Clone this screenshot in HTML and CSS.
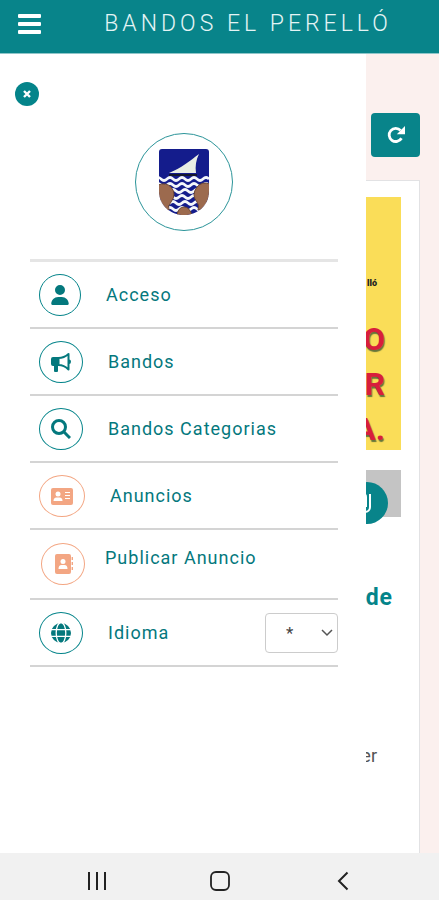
FILE: index.html
```
<!DOCTYPE html>
<html lang="es">
<head>
    <meta charset="UTF-8">
    <meta name="viewport" content="width=device-width, initial-scale=1">
    <title>Bandos El Perelló</title>
    <link rel="stylesheet" href="styles.css">
</head>
<body>
<header class="topbar">
    <button class="burger" type="button" aria-label="Menú">
        <span></span>
        <span></span>
        <span></span>
    </button>
    <h1 class="title">BANDOS EL PERELLÓ</h1>
</header>
<div class="screen">
    <main class="page">
        <div class="toolbar">
            <button class="reload" type="button" aria-label="Recargar">
                <svg viewBox="0 0 20 20" width="20" height="20">
                    <path d="M15.5 13.2A6.6 6.6 0 1 1 14.6 5.4" fill="none" stroke="#fff" stroke-width="2.8"/>
                    <path d="M19 1v8.2h-8.2z" fill="#fff"/>
                </svg>
            </button>
        </div>
        <article class="card">
            <div class="poster">
                <p class="poster-small">lló</p>
                <p class="poster-big">O</p>
                <p class="poster-big">R</p>
                <p class="poster-big">A.</p>
            </div>
            <div class="attach">
                <button class="clip" type="button" aria-label="Adjunto">
                    <svg viewBox="0 0 20 24" width="20" height="24" fill="none" stroke="#fff" stroke-width="2">
                        <path d="M13 3v13a5 5 0 0 1-10 0V6a3 3 0 0 1 6 0v10"/>
                    </svg>
                </button>
            </div>
            <h2 class="card-title">de</h2>
            <p class="card-text">er</p>
        </article>
    </main>
    <aside class="drawer">
        <button class="close" type="button" aria-label="Cerrar">
            <svg viewBox="0 0 10 10" width="10" height="10">
                <path d="M2 2l6 6M8 2l-6 6" stroke="#fff" stroke-width="2.4"/>
            </svg>
        </button>
        <div class="logo">
            <svg viewBox="0 0 50 66" width="50" height="66">
                <defs>
                    <clipPath id="shield">
                        <path d="M3 0H47Q50 0 50 3V42C50 56 39 66 25 66S0 56 0 42V3Q0 0 3 0z"/>
                    </clipPath>
                </defs>
                <g clip-path="url(#shield)">
                    <path d="M0 0h50v66H0z" fill="#141c8c"/>
                    <path d="M10 24C22 19 31 12 40 5C37 11 36 17 37 24z" fill="#e9eee4"/>
                    <path d="M10 26h28" stroke="#15192c" stroke-width="2"/>
                    <g fill="none" stroke="#f4f7fb" stroke-width="2.6">
                        <path d="M-4 30q3-3 6 0t6 0 6 0 6 0 6 0 6 0 6 0 6 0 6 0"/>
                        <path d="M-4 36q3-3 6 0t6 0 6 0 6 0 6 0 6 0 6 0 6 0 6 0"/>
                        <path d="M-1 42q3-3 6 0t6 0 6 0 6 0 6 0 6 0 6 0 6 0"/>
                        <path d="M-4 48q3-3 6 0t6 0 6 0 6 0 6 0 6 0 6 0 6 0 6 0"/>
                        <path d="M-1 54q3-3 6 0t6 0 6 0 6 0 6 0 6 0 6 0 6 0"/>
                        <path d="M-4 60q3-3 6 0t6 0 6 0 6 0 6 0 6 0 6 0 6 0 6 0"/>
                    </g>
                    <g fill="#9c6a4e" stroke="#6b4632">
                        <path d="M-1 36q8-3 13 2q6 7 0 15q-4 4-2 8L-1 60z"/>
                        <path d="M51 35q-8-3-13 3q-6 8 0 15q3 4 1 8l12-3z"/>
                        <path d="M18 67q1-9 7-9t8 9z"/>
                    </g>
                </g>
            </svg>
        </div>
        <ul class="menu">
            <li class="menu-item">
                <a class="menu-link" href="#">
                    <span class="icon">
                        <svg viewBox="0 0 448 512" width="18" height="20" fill="currentColor"><path d="M224 256A128 128 0 1 0 224 0a128 128 0 1 0 0 256zm-45.700 48C79.800 304 0 383.800 0 482.300C0 498.700 13.300 512 29.700 512H418.300c16.400 0 29.700-13.300 29.700-29.700C448 383.800 368.200 304 269.700 304H178.300z"/></svg>
                    </span>
                    <span class="label">Acceso</span>
                </a>
            </li>
            <li class="menu-item">
                <a class="menu-link" href="#">
                    <span class="icon">
                        <svg viewBox="0 0 20 20" width="20" height="20" fill="currentColor">
                            <path d="M2 5h6v9H7v5q0 1-1 1H4q-1 0-1-1v-5H2q-2 0-2-2V7q0-2 2-2z"/>
                            <path d="M7.500 6Q13 6 17.500 2v15.500Q13 13 7.500 13z" fill="none" stroke="currentColor" stroke-width="2" stroke-linejoin="round"/>
                            <path d="M18 7.500q2 0 2 2.200t-2 2.300z"/>
                        </svg>
                    </span>
                    <span class="label">Bandos</span>
                </a>
            </li>
            <li class="menu-item">
                <a class="menu-link" href="#">
                    <span class="icon">
                        <svg viewBox="0 0 20 20" width="20" height="20" fill="none" stroke="currentColor" stroke-width="3">
                            <circle cx="8" cy="8" r="6.500"/>
                            <path d="M12.500 12.500l6.500 6.500"/>
                        </svg>
                    </span>
                    <span class="label">Bandos Categorias</span>
                </a>
            </li>
            <li class="menu-item">
                <a class="menu-link" href="#">
                    <span class="icon icon-orange">
                        <svg viewBox="0 0 22 20" width="22" height="20">
                            <rect y="2" width="22" height="17" rx="2" fill="currentColor"/>
                            <circle cx="7" cy="8" r="2.500" fill="#fff"/>
                            <path d="M2.500 15q0-3.500 3-3.500h3q3 0 3 3.500z" fill="#fff"/>
                            <path d="M14 6.500h5M14 9.500h5M14 12.500h5" stroke="#fff"/>
                        </svg>
                    </span>
                    <span class="label">Anuncios</span>
                </a>
            </li>
            <li class="menu-item">
                <a class="menu-link menu-publish" href="#">
                    <span class="icon icon-orange">
                        <svg viewBox="0 0 20 20" width="20" height="20">
                            <rect x="2" width="16" height="20" rx="2" fill="currentColor"/>
                            <circle cx="10" cy="7.500" r="2.500" fill="#fff"/>
                            <path d="M5.500 15q0-4 3-4h3q3 0 3 4z" fill="#fff"/>
                            <path d="M19.300 3v3M19.300 8v3M19.300 13v3" stroke="currentColor" stroke-width="1.400"/>
                        </svg>
                    </span>
                    <span class="label">Publicar Anuncio</span>
                </a>
            </li>
            <li class="menu-item menu-lang">
                <label class="menu-link" for="lang">
                    <span class="icon">
                        <svg viewBox="0 0 20 20" width="20" height="20">
                            <circle cx="10" cy="10" r="10" fill="currentColor"/>
                            <g fill="none" stroke="#fff" stroke-width="1.300">
                                <ellipse cx="10" cy="10" rx="4.800" ry="10.500"/>
                                <path d="M0 6.700h20M0 13.300h20"/>
                            </g>
                        </svg>
                    </span>
                    <span class="label">Idioma</span>
                </label>
                <div class="select">
                    <select id="lang">
                        <option>*</option>
                    </select>
                    <svg class="arrow" viewBox="0 0 12 8" width="12" height="8">
                        <path d="M1 1l5 5 5-5" fill="none" stroke="#555" stroke-width="1.500"/>
                    </svg>
                </div>
            </li>
        </ul>
    </aside>
</div>
<nav class="navbar">
    <button type="button" aria-label="Recientes">
        <svg viewBox="0 0 20 20" width="20" height="20"><path d="M2 1v18M10 1v18M18 1v18" stroke="#222" stroke-width="2"/></svg>
    </button>
    <button type="button" aria-label="Inicio">
        <svg viewBox="0 0 20 20" width="20" height="20"><rect x="1" y="1" width="18" height="18" rx="5" fill="none" stroke="#222" stroke-width="1.800"/></svg>
    </button>
    <button type="button" aria-label="Atrás">
        <svg viewBox="0 0 20 20" width="20" height="20"><path d="M14.500 1.500L6 10l8.500 8.500" fill="none" stroke="#222" stroke-width="2"/></svg>
    </button>
</nav>
</body>
</html>
```
FILE: styles.css
```
* {
    margin: 0;
    padding: 0;
    box-sizing: border-box;
}
body {
    display: flex;
    flex-direction: column;
    min-height: 100vh;
    font-family: Roboto, "Liberation Sans", sans-serif;
    color: #04848a;
}
button {
    border: none;
    background: none;
    cursor: pointer;
}
svg {
    display: block;
}
ul {
    list-style: none;
}
.topbar {
    display: flex;
    align-items: center;
    height: 54px;
    padding: 0 18px 6px;
    background-color: #08848a;
    border-bottom: 1px solid #8fc6c9;
}
.burger {
    display: flex;
    flex-direction: column;
    gap: 4px;
}
.burger span {
    width: 23px;
    height: 4px;
    border-radius: 1px;
    background-color: #fff;
}
.title {
    flex: 1;
    padding-left: 34px;
    text-align: center;
    font-size: 23px;
    font-weight: 300;
    line-height: 28px;
    letter-spacing: 4px;
    white-space: nowrap;
    color: #e4f4f5;
}
.screen {
    position: relative;
    flex: 1;
    display: flex;
    overflow: hidden;
}
.page {
    flex: 1;
    display: flex;
    flex-direction: column;
    padding: 59px 19px 0 20px;
    background-color: #fbf0ee;
}
.toolbar {
    display: flex;
    justify-content: flex-end;
}
.reload {
    display: flex;
    align-items: center;
    justify-content: center;
    width: 49px;
    height: 44px;
    border-radius: 4px;
    background-color: #08848a;
}
.card {
    flex: 1;
    margin-top: 23px;
    padding: 16px 18px 0;
    text-align: right;
    background-color: #fff;
    border: 1px solid #e2e2e4;
    border-bottom: none;
}
.poster {
    height: 253px;
    padding: 76px 16px 0;
    background-color: #fadd58;
}
.poster-small {
    padding-right: 8px;
    font-size: 9px;
    font-weight: 900;
    line-height: 20px;
    color: #222;
}
.poster-small + .poster-big {
    margin-top: 24px;
}
.poster-big {
    font-size: 32px;
    font-weight: 700;
    line-height: 45px;
    color: #d81e3c;
    text-shadow: 1px 2px 1px #66743a;
}
.attach {
    display: flex;
    justify-content: flex-end;
    height: 47px;
    margin-top: 20px;
    padding: 12px 13px 0;
    background-color: #c4c4c4;
}
.clip {
    display: flex;
    align-items: center;
    justify-content: center;
    width: 42px;
    height: 42px;
    border-radius: 50%;
    background-color: #08848a;
}
.card-title {
    margin-top: 66px;
    padding-right: 8px;
    font-size: 23px;
    line-height: 30px;
    letter-spacing: 1px;
}
.card-text {
    margin-top: 128px;
    padding-right: 24px;
    font-size: 18px;
    line-height: 30px;
    color: #555;
}
.drawer {
    position: absolute;
    top: 0;
    bottom: 0;
    left: 0;
    right: 73px;
    padding: 28px 28px 0 30px;
    background-color: #fff;
}
.close {
    display: flex;
    align-items: center;
    justify-content: center;
    width: 24px;
    height: 24px;
    margin-left: -15px;
    border-radius: 50%;
    background-color: #04848a;
}
.logo {
    display: flex;
    align-items: center;
    justify-content: center;
    width: 98px;
    height: 98px;
    margin: 27px auto 28px;
    border: 1px solid #2b9499;
    border-radius: 50%;
}
.menu {
    border-top: 3px solid #e5e5e5;
}
.menu-item {
    border-bottom: 2px solid #d4d4d4;
}
.menu-link {
    display: flex;
    align-items: center;
    gap: 25px;
    height: 65px;
    padding-left: 9px;
    color: #04787d;
    text-decoration: none;
}
.menu-publish {
    gap: 20px;
    height: 68px;
    padding-left: 11px;
}
.menu-publish .label {
    padding-bottom: 12px;
}
.icon {
    padding: 10px 11px;
    border: 1px solid #04848a;
    border-radius: 50%;
}
.icon-orange {
    color: #f3a683;
    border-color: #f3a683;
}
.label {
    font-size: 18px;
    line-height: 24px;
    letter-spacing: 1px;
}
.menu-lang {
    display: flex;
    align-items: center;
    justify-content: space-between;
}
.select {
    position: relative;
}
.select select {
    appearance: none;
    width: 73px;
    height: 40px;
    padding-left: 20px;
    border: 1px solid #ccc;
    border-radius: 4px;
    background-color: #fff;
    font-family: inherit;
    font-size: 17px;
    color: #444;
}
.arrow {
    position: absolute;
    top: 16px;
    right: 5px;
    pointer-events: none;
}
.navbar {
    display: flex;
    align-items: center;
    height: 47px;
    padding: 8px 35px 0;
    background-color: #f1f1f1;
}
.navbar button {
    flex: 1;
    display: flex;
    justify-content: center;
}
```
